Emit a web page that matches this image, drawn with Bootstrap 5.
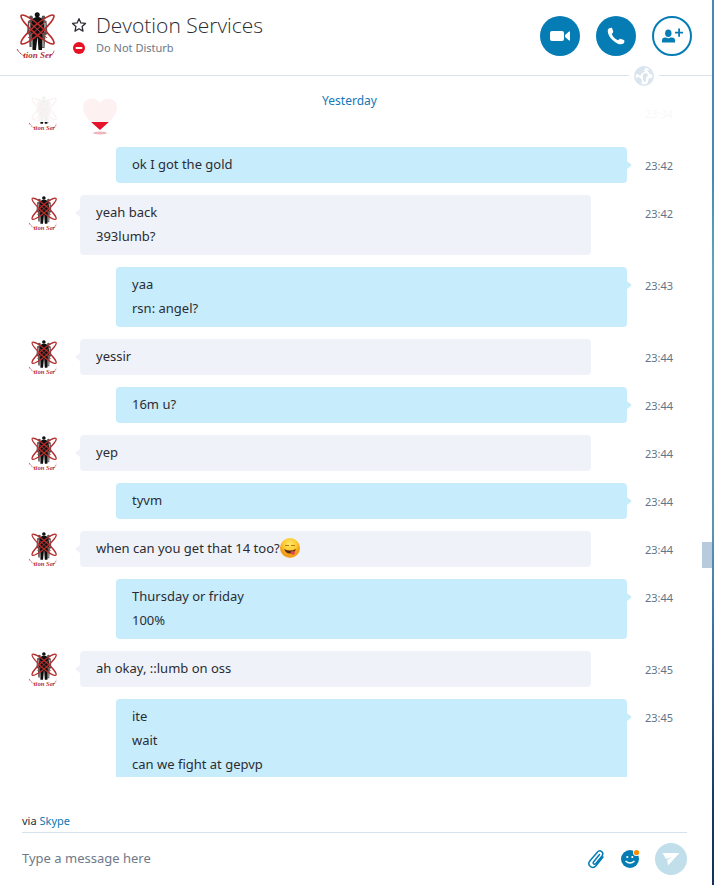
<!DOCTYPE html>
<html lang="en">
<head>
<meta charset="utf-8">
<meta name="viewport" content="width=device-width, initial-scale=1">
<title>Devotion Services</title>
<link href="https://cdn.jsdelivr.net/npm/bootstrap@5.3.0/dist/css/bootstrap.min.css" rel="stylesheet">
<style>
body{font-family:"Noto Sans","Open Sans",sans-serif;font-size:13px;line-height:24px;color:#2b2c33;background:#fff}
.shell{border-right:2px solid;border-image:linear-gradient(#4a86b9,#4689b8 20%,#5fa5b8 30%,#5b93b5 60%,#3c75a8 70%,#173b66 90%,#12305a) 1}
.top-bar{height:76px;border-bottom:1px solid #d9e4ec;padding:0 20px 0 17px;z-index:2}
.chat-name{font-family:"Open Sans","Noto Sans",sans-serif;font-size:21px;font-weight:300;line-height:28px;margin:0}
.plain{background:none;border:0;padding:0;line-height:0;flex:none}
.state{font-size:11px;line-height:18px;color:#6b7889}
.logo-large{margin-top:12px}
.head-col{padding-left:16px;padding-top:11px}
.mark-cell{width:16px;margin-right:9px;display:flex;align-items:center;justify-content:center}
.round{width:40px;height:40px;border-radius:50%;background:#067cb5;color:#fff;border:0;padding:0;display:flex;align-items:center;justify-content:center}
.round.hollow{background:#fff;color:#067cb5;border:2px solid #067cb5}
.globe{position:absolute;right:53px;bottom:-11px;width:30px;height:20px;background:#fff;line-height:0;text-align:center}
.history{padding-top:19px;display:flex;flex-direction:column;gap:12px}
.veil{position:absolute;top:0;left:0;right:0;height:46px;padding:12px 13px 0 0;background:rgba(255,255,255,.94)}
.day{font-size:12px;color:#1478b8}
.entry{display:flex;flex:none;align-items:flex-start}
.face{width:52px;margin-left:28px;padding-top:1px;line-height:0;flex:none}
.stamp{width:85px;padding-left:18px;padding-top:7px;flex:none;font-size:11px;color:#627387}
.bubble{flex:1;position:relative;border-radius:4px;padding:5px 16px 7px;background:#eff2f8;margin-right:36px}
.mine .bubble{background:#c7ecfc;margin-right:0;margin-left:36px}
.tip{position:absolute;left:-5px;top:10px;fill:#eff2f8}
.mine .tip{left:auto;right:-5px;fill:#c7ecfc;transform:scaleX(-1)}
.heart-cell{flex:1;height:40px;line-height:0;padding-left:1px}
.grip{position:absolute;right:0;top:466px;width:10px;height:26px;background:#b7cbdc}
.bottom-bar{height:108px;padding:32px 25px 0 22px;flex:none}
.via{font-size:11px;border-bottom:1px solid #d3e2eb;margin:0;height:24px}
.via a{color:#0a78b5;text-decoration:none}
.write{flex:1;min-width:0;border:0;padding:0 0 2px;background:none;outline:0;font-size:13px;line-height:24px}
.write::placeholder{color:#6f7a89;opacity:1}
.composer{height:52px}
.send{width:32px;height:32px;border-radius:50%;background:#c1deeb;display:flex;align-items:center;justify-content:center}
</style>
<script src="https://cdn.jsdelivr.net/npm/bootstrap@5.3.0/dist/js/bootstrap.bundle.min.js"></script>
</head>
<body>
<svg width="0" height="0" class="position-absolute" aria-hidden="true">
<symbol id="logo" viewBox="0 0 38 48" overflow="visible">
<g fill="#555"><circle cx="14" cy="5.500" r="1.900"/><circle cx="26.500" cy="5.500" r="1.900"/><path d="M11 9l3-1.500 4 1 5 0 3.500-1 3 1.500 1 13-2 1-1 13h-3l-1.500-10-6 0-1.500 9h-3l-.5-12-2-2z"/></g>
<g fill="#101010"><circle cx="20.200" cy="2.700" r="2.500"/><path d="M15 7l4-2h3l4 2 1.500 13-2 1-.5 17h-3.500l-1-14-1.500 14h-3.500l-.5-17-1.500-1z"/></g>
<path d="M12.500 11v9M28 11v9M15 27v8M26 27v8" stroke="#ccc" stroke-width="1"/>
<g fill="none" stroke="#b82b2b" stroke-width="1.700"><ellipse cx="20.500" cy="17.500" rx="21.500" ry="4.500" transform="rotate(41 20.500 17.500)"/><ellipse cx="20.500" cy="17.500" rx="21.500" ry="4.500" transform="rotate(-41 20.500 17.500)"/></g>
<path d="M11 26l18-17M11 9l19 17" stroke="#cf4040" stroke-width="1"/>
<path d="M0 37c2 4 5 6 8 7M32 44c3-1 5-3 5-6" fill="none" stroke="#b94040" stroke-width="1" stroke-dasharray="3 1"/>
<text x="21" y="46" text-anchor="middle" font-family="Liberation Serif,serif" font-size="9" font-style="italic" font-weight="700" fill="#b83232">tion Ser</text>
</symbol>
<symbol id="tail" viewBox="0 0 6 16"><path d="M6 0C6 4 4 5 1 7Q0 8 1 9C4 11 6 12 6 16z"/></symbol>
</svg>
<div class="shell vh-100 d-flex flex-column overflow-hidden">
<header class="top-bar d-flex position-relative flex-shrink-0 align-items-start">
<svg width="38" height="48" class="logo-large flex-shrink-0 overflow-visible" role="img" aria-label="Devotion Services"><use href="#logo"/></svg>
<div class="head-col flex-grow-1">
<div class="d-flex align-items-center">
<button class="plain mark-cell" aria-label="Add to favourites"><svg width="16" height="16" viewBox="0 0 16 16" fill="none" stroke="#2b2c33" stroke-width="1.300" stroke-linejoin="round"><path d="M8 1.700l1.900 4.200 4.600.5-3.400 3.100.9 4.600L8 11.800l-4 2.300.9-4.600L1.500 6.400l4.600-.5z"/></svg></button>
<h1 class="chat-name">Devotion Services</h1></div>
<div class="d-flex align-items-center"><span class="mark-cell"><svg width="12" height="12" viewBox="0 0 12 12"><circle cx="6" cy="6" r="6" fill="#e81123"/><path d="M3.500 6h5" stroke="#fff" stroke-width="2" stroke-linecap="round"/></svg></span><span class="state">Do Not Disturb</span></div>
</div>
<div class="d-flex gap-3 pt-3">
<button class="round" aria-label="Video call"><svg width="22" height="14" viewBox="0 0 22 14" fill="#fff"><rect x="1" y="2" width="14" height="10" rx="2"/><path d="M16 6l4-3.500h1v9h-1l-4-3.500z"/></svg></button>
<button class="round" aria-label="Call"><svg width="18" height="18" viewBox="0 0 18 18" fill="#fff"><path d="M1 2.500C2 1 4 .2 5 1l1.300 3.800c.2.800-1.700 1.700-1.300 2.800 1 2.600 3 4.500 5.500 5.500 1.100.4 1.800-1.600 2.700-1.400l3.700 1.200c1 .5.500 2.600-.5 3.600-1 1-3 .9-5 .4C6 14.500 2.500 10.500 1.200 6.500 .9 5 .500 3.500 1 2.500z"/></svg></button>
<button class="round hollow" aria-label="Add people"><svg width="22" height="16" viewBox="0 0 22 16" fill="currentColor"><ellipse cx="7.300" cy="5.300" rx="3.200" ry="3.800"/><path d="M1 14.500V12c0-2 2-2.500 4-2.500q2.300 1.500 4.500 0c2.500 0 4.500.5 4.500 2.500v2.500zM14 3.700h3.200V.5h1.800v3.200h3v1.800h-3v3.200h-1.800V5.500H14z"/></svg></button>
</div>
<span class="globe"><svg width="20" height="20" viewBox="0 0 20 20"><circle cx="10" cy="10" r="9.200" fill="#fff" stroke="#d9e4ee" stroke-width="1.600"/><path fill="#d9e4ee" d="M1 9C2 4 6 1 10 1l2 1-2 2 1 2-3 1-2 3-2-2zM2 12l3-1 3 3-1 5C4 17 2 15 2 12zM9 8l4-1 1 3-2 1v4l-2 1-1-3zM13 4l3 0 3 5-3-1zM15 12l3 0-2 5-3 2z"/></svg></span>
</header>
<main class="position-relative flex-grow-1 overflow-hidden">
<div class="history position-absolute w-100">
<div class="entry"><div class="face"><svg width="30" height="35"><use href="#logo"/></svg></div><div class="heart-cell"><svg width="38" height="40" viewBox="0 0 38 40" role="img" aria-label="Heart"><ellipse cx="19" cy="38" rx="7" ry="1.500" fill="#f3b5bb"/><path d="M19 35C10 27 2 21 2 12 2 2 15 1 19 8 23 1 36 2 36 12 36 21 28 27 19 35z" fill="#e5142c"/></svg></div><time class="stamp">23:34</time></div>
<div class="entry mine"><div class="face"></div><div class="bubble"><svg class="tip" width="6" height="16"><use href="#tail"/></svg>ok I got the gold</div><time class="stamp">23:42</time></div>
<div class="entry"><div class="face"><svg width="30" height="35"><use href="#logo"/></svg></div><div class="bubble"><svg class="tip" width="6" height="16"><use href="#tail"/></svg>yeah back<br>393lumb?</div><time class="stamp">23:42</time></div>
<div class="entry mine"><div class="face"></div><div class="bubble"><svg class="tip" width="6" height="16"><use href="#tail"/></svg>yaa<br>rsn: angel?</div><time class="stamp">23:43</time></div>
<div class="entry"><div class="face"><svg width="30" height="35"><use href="#logo"/></svg></div><div class="bubble"><svg class="tip" width="6" height="16"><use href="#tail"/></svg>yessir</div><time class="stamp">23:44</time></div>
<div class="entry mine"><div class="face"></div><div class="bubble"><svg class="tip" width="6" height="16"><use href="#tail"/></svg>16m u?</div><time class="stamp">23:44</time></div>
<div class="entry"><div class="face"><svg width="30" height="35"><use href="#logo"/></svg></div><div class="bubble"><svg class="tip" width="6" height="16"><use href="#tail"/></svg>yep</div><time class="stamp">23:44</time></div>
<div class="entry mine"><div class="face"></div><div class="bubble"><svg class="tip" width="6" height="16"><use href="#tail"/></svg>tyvm</div><time class="stamp">23:44</time></div>
<div class="entry"><div class="face"><svg width="30" height="35"><use href="#logo"/></svg></div><div class="bubble"><svg class="tip" width="6" height="16"><use href="#tail"/></svg><span class="d-flex align-items-center">when can you get that 14 too? <svg width="20" height="20" viewBox="0 0 20 20" role="img" aria-label="Tongue out"><defs><radialGradient id="sun" cy=".3"><stop offset="0" stop-color="#ffe768"/><stop offset=".7" stop-color="#fcc82f"/><stop offset="1" stop-color="#f2a01c"/></radialGradient></defs><circle cx="10" cy="10" r="10" fill="url(#sun)"/><path d="M5 7.500h4M11 7.500h4" stroke="#b97a1a" stroke-width="1"/><path d="M4 11q6 3 12 0-1.500 4.500-6 4.500-4 0-6-4.500z" fill="#5b2a12"/><path d="M10.500 14q2-1.500 4-.5l.5 2q-1 1.500-3 1z" fill="#e8434a"/></svg></span></div><time class="stamp">23:44</time></div>
<div class="entry mine"><div class="face"></div><div class="bubble"><svg class="tip" width="6" height="16"><use href="#tail"/></svg>Thursday or friday<br>100%</div><time class="stamp">23:44</time></div>
<div class="entry"><div class="face"><svg width="30" height="35"><use href="#logo"/></svg></div><div class="bubble"><svg class="tip" width="6" height="16"><use href="#tail"/></svg>ah okay, ::lumb on oss</div><time class="stamp">23:45</time></div>
<div class="entry mine"><div class="face"></div><div class="bubble"><svg class="tip" width="6" height="16"><use href="#tail"/></svg>ite<br>wait<br>can we fight at gepvp</div><time class="stamp">23:45</time></div>
</div>
<div class="veil text-center"><span class="day">Yesterday</span></div>
<span class="grip"></span>
</main>
<footer class="bottom-bar">
<p class="via">via <a href="#">Skype</a></p>
<form class="composer d-flex align-items-center">
<input class="write" type="text" aria-label="Message" placeholder="Type a message here">
<button type="button" class="plain me-3" aria-label="Attach file"><svg width="18" height="20" viewBox="0 0 18 20" fill="none" stroke="#067cb5" stroke-width="1.500" stroke-linecap="round"><path d="M12.500 5.500l-6 7.500c-1 1.500 1 3 2.200 1.700L15 7c2.500-3.500-1.800-7-4.700-3.800L3 11.700c-3.500 4.500 2.500 9.300 6.200 4.800L16 8"/></svg></button>
<button type="button" class="plain me-3" aria-label="Emoji"><svg width="18" height="20" viewBox="0 0 18 20"><circle cx="9" cy="10" r="9" fill="#067cb5"/><g fill="#fff"><circle cx="6.300" cy="8" r="1.100"/><circle cx="11.300" cy="8" r="1.100"/></g><path d="M4.500 12q4.500 4 9 0" fill="none" stroke="#fff" stroke-width="1.400"/><circle cx="15.500" cy="3.500" r="3.500" fill="#fff"/><circle cx="15.500" cy="3.500" r="2.600" fill="#ff8c00"/></svg></button>
<button type="button" class="plain send" aria-label="Send"><svg width="18" height="14" viewBox="0 0 18 14" fill="#fff"><path d="M.5 1h17L6 13.500l-.8-5.500 5-3-6.200 2z"/></svg></button>
</form>
</footer>
</div>
</body>
</html>
